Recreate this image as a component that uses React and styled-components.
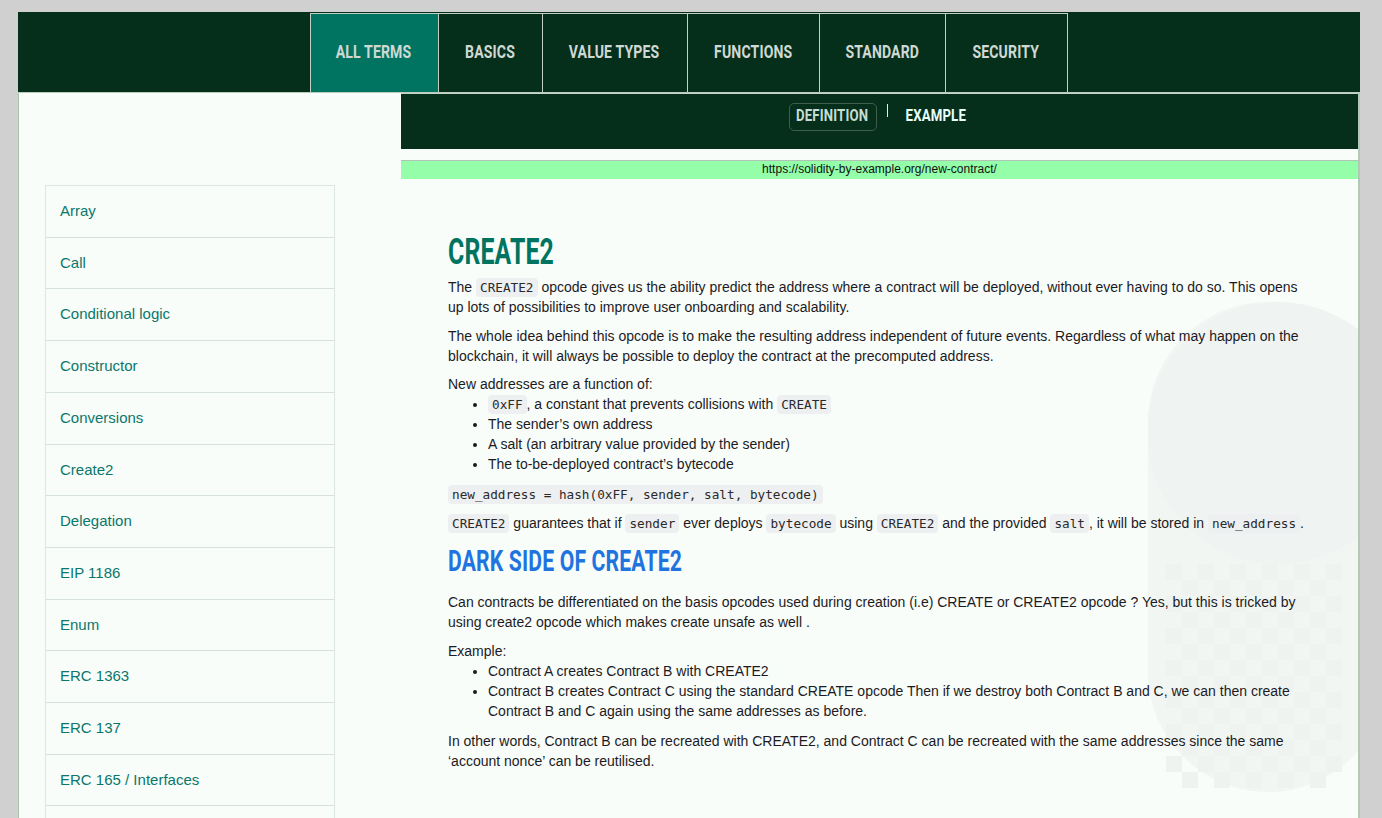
import React from "react";
import styled, { createGlobalStyle } from "styled-components";

const GlobalStyle = createGlobalStyle`
  body {
    margin: 0;
    background: #d0d0d0;
    font-family: "Liberation Sans", Arial, sans-serif;
  }
`;

const Page = styled.div`
  padding: 12px 22px 0 18px;
  height: 806px;
  overflow: hidden;
`;

const Header = styled.header`
  height: 80px;
  background: #052f1b;
  display: flex;
  justify-content: center;
  border-bottom: 1px solid #b9cdbd;
`;

const Tab = styled.a`
  width: ${p => p.$w}px;
  height: 79px;
  box-sizing: border-box;
  margin-top: 1px;
  padding-bottom: 3px;
  border: 1px solid #c3d1c5;
  border-bottom: none;
  margin-left: -1px;
  background: ${p => (p.$active ? "#007461" : "#052f1b")};
  display: flex;
  align-items: center;
  justify-content: center;
  cursor: pointer;
`;

const Condensed = styled.span`
  display: inline-block;
  font-family: Roboto, "Liberation Sans", sans-serif;
  font-weight: 700;
  font-size: ${p => p.$size || 18}px;
  line-height: 1;
  color: ${p => p.$color || "#cfd8d2"};
  transform: scaleX(${p => p.$sx || 0.78});
  transform-origin: ${p => p.$origin || "center"};
  white-space: nowrap;
  letter-spacing: 0.2px;
`;

const Body = styled.div`
  display: grid;
  grid-template-columns: 382px 1fr;
  background: #f8fdf9;
  border-left: 1px solid #a9c3ad;
  height: 725px;
`;

const Sidebar = styled.aside`
  padding: 92px 0 0 26px;
`;

const TermList = styled.ul`
  list-style: none;
  margin: 0;
  padding: 0;
  width: 290px;
  box-sizing: border-box;
  border: 1px solid #dce7df;
  border-bottom: none;
`;

const Term = styled.li`
  padding: 15px 14px;
  font-size: 15px;
  line-height: 20.7px;
  color: #0b776c;
  border-bottom: 1px solid #d7e2da;
  cursor: pointer;
`;

const Main = styled.main`
  display: flex;
  flex-direction: column;
  border-right: 2px solid #b3c9b7;
`;

const SubNav = styled.nav`
  height: 56px;
  background: #052f1b;
  border-top: 1px solid #c7d5c9;
  display: flex;
  align-items: flex-start;
  justify-content: center;
  gap: 10px;
  padding: 9px 0 0 3px;
  box-sizing: border-box;
`;

const SubButton = styled.button`
  height: 28px;
  width: ${p => p.$w}px;
  padding: 0 0 1px;
  background: transparent;
  border: 1px solid ${p => (p.$outlined ? "#3e5f4d" : "transparent")};
  border-radius: 5px;
  display: flex;
  align-items: center;
  justify-content: center;
  cursor: pointer;
`;

const Divider = styled.span`
  width: 1px;
  height: 13px;
  margin-top: 1px;
  background: #e6ece8;
`;

const Panel = styled.section`
  position: relative;
  margin-top: 11px;
  flex: 1;
  border-top: 1px solid #b3c2b6;
  overflow: hidden;
`;

const UrlBar = styled.div`
  height: 18px;
  background: #94fea8;
  text-align: center;
  font-size: 12px;
  line-height: 17px;
  color: #111;
`;

const Watermark = styled.svg`
  position: absolute;
  right: -2px;
  top: 141px;
  z-index: 0;
`;

const Article = styled.article`
  position: relative;
  z-index: 1;
  padding: 52px 46px 0 47px;
  font-size: 14px;
  line-height: 20px;
  color: #1d1a1f;
`;

const Heading = styled.h1`
  margin: 0 0 5px;
  height: 41px;
  display: flex;
  align-items: center;
`;

const SubHeading = styled.h2`
  margin: 12px 0 14px;
  height: 33px;
  display: flex;
  align-items: center;
`;

const P = styled.p`
  margin: 0 0 ${p => (p.$tight ? 0 : 8.5)}px;
`;

const List = styled.ul`
  margin: 0 0 10px;
  padding-left: 40px;
  & li {
    line-height: 20.1px;
  }
`;

const Code = styled.code`
  font-family: "DejaVu Sans Mono", "Liberation Mono", monospace;
  font-size: 12.7px;
  line-height: 1;
  background: #eeeff0;
  border-radius: 4px;
  padding: 2px 4px;
  color: #2a2a2a;
`;

const CodeLine = styled.div`
  margin: 0 0 9px;
`;

const tabs = [
  ["ALL TERMS", 129, true],
  ["BASICS", 105],
  ["VALUE TYPES", 146],
  ["FUNCTIONS", 133],
  ["STANDARD", 127],
  ["SECURITY", 123],
];

const terms = [
  "Array",
  "Call",
  "Conditional logic",
  "Constructor",
  "Conversions",
  "Create2",
  "Delegation",
  "EIP 1186",
  "Enum",
  "ERC 1363",
  "ERC 137",
  "ERC 165 / Interfaces",
  "ERC 20",
];

const checker = [];
for (let r = 0; r < 14; r++) {
  for (let c = 0; c < 11; c++) {
    if ((r + c) % 2 === 0) checker.push([c, r]);
  }
}

export default function App() {
  return (
    <>
      <GlobalStyle />
      <Page>
        <Header>
          {tabs.map(([label, w, active]) => (
            <Tab key={label} $w={w} $active={active}>
              <Condensed>{label}</Condensed>
            </Tab>
          ))}
        </Header>
        <Body>
          <Sidebar>
            <TermList>
              {terms.map(t => (
                <Term key={t}>{t}</Term>
              ))}
            </TermList>
          </Sidebar>
          <Main>
            <SubNav>
              <SubButton $outlined $w={88}>
                <Condensed $size={16.5} $color="#c4ddd5" $sx={0.8}>
                  DEFINITION
                </Condensed>
              </SubButton>
              <Divider />
              <SubButton $w={76}>
                <Condensed $size={16.5} $color="#e8fff9" $sx={0.8}>
                  EXAMPLE
                </Condensed>
              </SubButton>
            </SubNav>
            <Panel>
              <UrlBar>https://solidity-by-example.org/new-contract/</UrlBar>
              <Watermark width="212" height="520" viewBox="0 0 212 520">
                <rect x="0" y="0" width="240" height="490" rx="120" fill="#f2f6f3" />
                <circle cx="130" cy="131" r="131" fill="#eff3f1" />
                <g fill="#eff3f0">
                  {checker.map(([c, r]) => (
                    <rect key={c + "-" + r} x={18 + c * 16} y={262 + r * 16} width="16" height="16" />
                  ))}
                </g>
              </Watermark>
              <Article>
                <Heading>
                  <Condensed $size={36} $color="#007461" $sx={0.69} $origin="left">
                    CREATE2
                  </Condensed>
                </Heading>
                <P>
                  The <Code>CREATE2</Code> opcode gives us the ability predict the address where a
                  contract will be deployed, without ever having to do so. This opens up lots of
                  possibilities to improve user onboarding and scalability.
                </P>
                <P>
                  The whole idea behind this opcode is to make the resulting address independent of
                  future events. Regardless of what may happen on the blockchain, it will always be
                  possible to deploy the contract at the precomputed address.
                </P>
                <P $tight>New addresses are a function of:</P>
                <List>
                  <li>
                    <Code>0xFF</Code>, a constant that prevents collisions with <Code>CREATE</Code>
                  </li>
                  <li>The sender’s own address</li>
                  <li>A salt (an arbitrary value provided by the sender)</li>
                  <li>The to-be-deployed contract’s bytecode</li>
                </List>
                <CodeLine>
                  <Code>new_address = hash(0xFF, sender, salt, bytecode)</Code>
                </CodeLine>
                <P>
                  <Code>CREATE2</Code> guarantees that if <Code>sender</Code> ever deploys{" "}
                  <Code>bytecode</Code> using <Code>CREATE2</Code> and the provided <Code>salt</Code>,
                  it will be stored in <Code>new_address</Code>.
                </P>
                <SubHeading>
                  <Condensed $size={29} $color="#1f74df" $sx={0.73} $origin="left">
                    DARK SIDE OF CREATE2
                  </Condensed>
                </SubHeading>
                <P>
                  Can contracts be differentiated on the basis opcodes used during creation (i.e)
                  CREATE or CREATE2 opcode ? Yes, but this is tricked by using create2 opcode which
                  makes create unsafe as well .
                </P>
                <P $tight>Example:</P>
                <List>
                  <li>Contract A creates Contract B with CREATE2</li>
                  <li>
                    Contract B creates Contract C using the standard CREATE opcode Then if we destroy
                    both Contract B and C, we can then create Contract B and C again using the same
                    addresses as before.
                  </li>
                </List>
                <P>
                  In other words, Contract B can be recreated with CREATE2, and Contract C can be
                  recreated with the same addresses since the same ‘account nonce’ can be reutilised.
                </P>
              </Article>
            </Panel>
          </Main>
        </Body>
      </Page>
    </>
  );
}
